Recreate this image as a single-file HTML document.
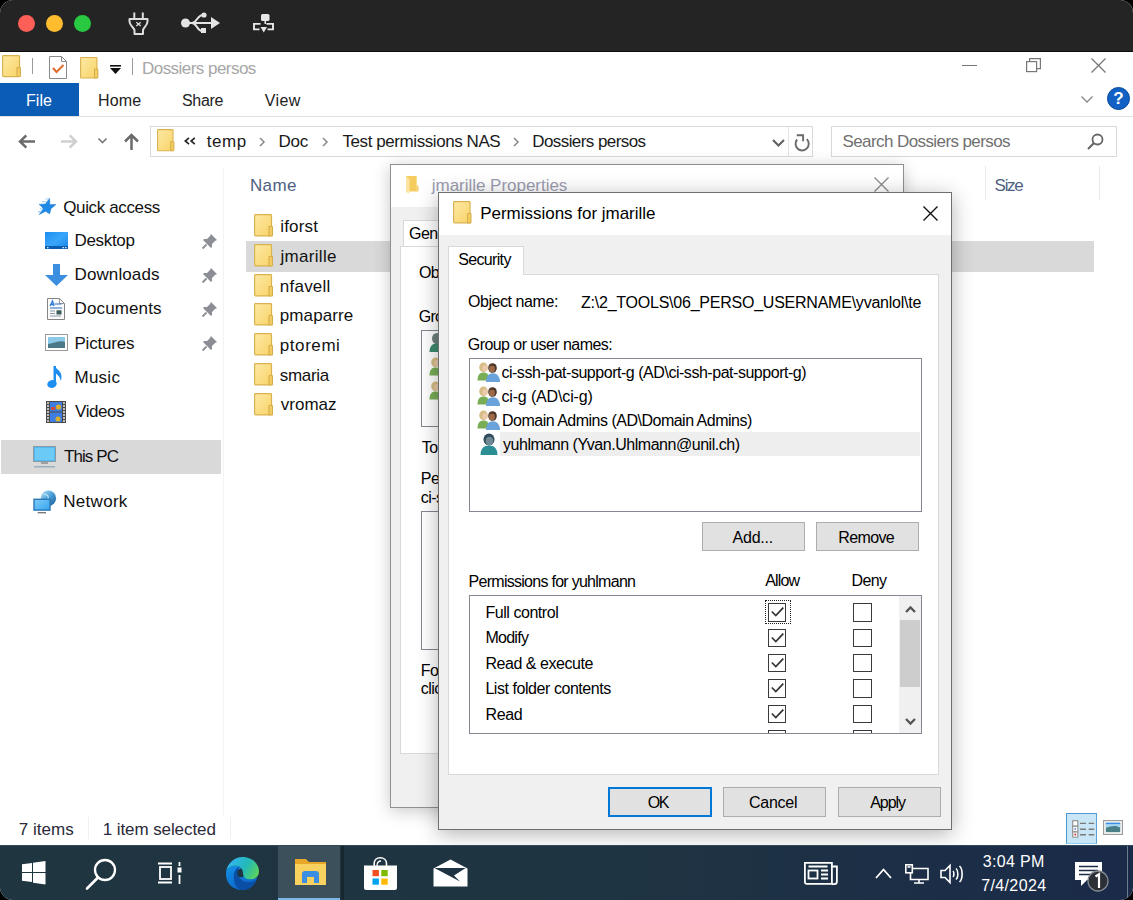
<!DOCTYPE html>
<html><head><meta charset="utf-8">
<style>
*{margin:0;padding:0;box-sizing:border-box}
html,body{width:1133px;height:900px;overflow:hidden;background:#000;font-family:"Liberation Sans",sans-serif}
.a{position:absolute}
svg{position:absolute;overflow:visible}
#screen{position:absolute;left:0;top:0;width:1133px;height:900px;background:#fff;border-radius:13px;overflow:hidden}
.t{position:absolute;white-space:nowrap;line-height:1}
.ex{font-size:17px;letter-spacing:-0.35px;color:#1a1a1a}
.dl{font-size:16px;letter-spacing:-0.6px;color:#000}
.fold{position:absolute;width:19px;height:22px}
</style></head><body>
<div id="screen">
<svg width="0" height="0" style="position:absolute"><defs><linearGradient id="fg" x1="0" y1="0" x2="1" y2="1"><stop offset="0" stop-color="#fde9a6"/><stop offset="1" stop-color="#f8d367"/></linearGradient></defs></svg>

<!-- ===== mac title bar ===== -->
<div class="a" style="left:0;top:0;width:1133px;height:52px;background:#242424;border-bottom:1px solid #0c0c0c"></div>
<div class="a" style="left:18px;top:15px;width:17px;height:17px;border-radius:50%;background:#fe5f57"></div>
<div class="a" style="left:46px;top:15px;width:17px;height:17px;border-radius:50%;background:#febc2e"></div>
<div class="a" style="left:74px;top:15px;width:17px;height:17px;border-radius:50%;background:#28c840"></div>
<!-- plug -->
<svg style="left:128px;top:12px" width="22" height="23" viewBox="0 0 22 23"><g fill="none" stroke="#dcdcdc" stroke-width="2"><path d="M6.3 0.5v6M14.8 0.5v6"/><path d="M1.5 7h18v2.5c0 4.5-4.5 6-4.5 9v3.5H6.5v-3.5C6.5 15.5 1.5 14 1.5 9.5z" stroke-linejoin="round"/><path d="M8.3 10.3l4.4 3.6M12.7 10.3l-4.4 3.6" stroke-width="1.3"/></g></svg>
<!-- usb -->
<svg style="left:181px;top:12px" width="39" height="23" viewBox="0 0 39 23"><g fill="#e4e4e4" stroke="#e4e4e4"><circle cx="4.5" cy="11" r="4.5" stroke="none"/><path d="M8 11h24" stroke-width="2"/><path d="M30 5l9 6-9 6z" stroke="none"/><path d="M11 11c5 0 5-8 11-8" fill="none" stroke-width="2"/><circle cx="23" cy="3" r="2.6" stroke="none"/><path d="M11 11c5 0 5 8 10 8" fill="none" stroke-width="2"/><rect x="20" y="16" width="5" height="5" stroke="none"/></g></svg>
<!-- network -->
<svg style="left:252.5px;top:14px" width="21" height="19" viewBox="0 0 21 19"><g fill="#e8e8e8"><rect x="8" y="0" width="8.5" height="7" rx="1.5"/><rect x="11.5" y="6.5" width="1.6" height="3.5"/></g><g fill="none" stroke="#e8e8e8" stroke-width="1.9"><path d="M7.5 9.9H1v5.5h5.5"/><path d="M13.5 9.9H20v5.5h-5.5"/></g><path d="M7.5 13h6.5l-3.25 5.5z" fill="#e8e8e8"/></svg>

<!-- ===== QAT row ===== -->
<svg style="left:2.0px;top:55.2px" width="19.0" height="22.2" viewBox="0 0 18 22.5" preserveAspectRatio="none"><rect x="0.6" y="0.6" width="16" height="21.3" rx="0.8" fill="url(#fg)" stroke="#d9b24f" stroke-width="1.1"/><rect x="14.2" y="12.6" width="3.3" height="9.3" rx="0.5" fill="#f3cd63" stroke="#d5ad4a" stroke-width="1"/></svg>
<svg style="left:79.8px;top:57.0px" width="18.4" height="21.5" viewBox="0 0 18 22.5" preserveAspectRatio="none"><rect x="0.6" y="0.6" width="16" height="21.3" rx="0.8" fill="url(#fg)" stroke="#d9b24f" stroke-width="1.1"/><rect x="14.2" y="12.6" width="3.3" height="9.3" rx="0.5" fill="#f3cd63" stroke="#d5ad4a" stroke-width="1"/></svg>
<div class="a" style="left:32px;top:58px;width:1px;height:16px;background:#9a9a9a"></div>
<svg style="left:49px;top:56px" width="18" height="23" viewBox="0 0 18 23"><path d="M0.5 0.5h12l5 5v17h-17z" fill="#fff" stroke="#8a8a8a"/><path d="M12.5 0.5v5h5" fill="none" stroke="#8a8a8a"/><path d="M4 12l3.5 4 7-7" fill="none" stroke="#e06b2a" stroke-width="2"/></svg>
<svg style="left:110px;top:65px" width="11" height="9" viewBox="0 0 11 9"><rect x="0" y="0" width="11" height="1.6" fill="#111"/><path d="M0 3h11l-5.5 6z" fill="#111"/></svg>
<div class="a" style="left:132px;top:58px;width:1px;height:17px;background:#9a9a9a"></div>
<div class="t ex" style="left:142.0px;top:59.8px;color:#a6a6a6;letter-spacing:-0.536px;font-size:17px">Dossiers persos</div>
<!-- window controls -->
<div class="a" style="left:962px;top:65px;width:15px;height:1px;background:#777"></div>
<svg style="left:1026px;top:58px" width="15" height="14" viewBox="0 0 15 14"><g fill="none" stroke="#777" stroke-width="1.2"><rect x="0.6" y="3.6" width="10" height="10"/><path d="M3.6 3.6V0.6h10.8v10h-3.8"/></g></svg>
<svg style="left:1091px;top:58px" width="15" height="15" viewBox="0 0 15 15"><path d="M0.5 0.5l14 14M14.5 0.5l-14 14" stroke="#777" stroke-width="1.3"/></svg>

<!-- ===== ribbon tabs ===== -->
<div class="a" style="left:0;top:83px;width:79px;height:33px;background:#0b5cb5"></div>
<div class="t" style="left:26.0px;top:93.0px;font-size:16px;color:#fff;letter-spacing:0.067px">File</div>
<div class="t ex" style="left:97.9px;top:93.0px;font-size:16px;letter-spacing:0.233px;color:#222">Home</div>
<div class="t ex" style="left:182.0px;top:93.0px;font-size:16px;letter-spacing:-0.300px;color:#222">Share</div>
<div class="t ex" style="left:264.8px;top:92.9px;font-size:16px;letter-spacing:0.400px;color:#222">View</div>
<svg style="left:1081px;top:96px" width="12" height="7" viewBox="0 0 12 7"><path d="M0.5 0.5l5.5 5.5 5.5-5.5" fill="none" stroke="#888" stroke-width="1.3"/></svg>
<div class="a" style="left:1107px;top:87px;width:23px;height:23px;border-radius:50%;background:#1162c4;border:1px solid #0b4a9a"></div>
<div class="t" style="left:1112px;top:90px;width:13px;text-align:center;font-size:17px;font-weight:bold;color:#fff">?</div>
<div class="a" style="left:0;top:116px;width:1133px;height:1px;background:#e1e1e1"></div>

<!-- ===== address bar row ===== -->
<svg style="left:18px;top:134px" width="18" height="15" viewBox="0 0 18 15"><path d="M17 7.5H2.5M8.3 1.3L2 7.5l6.3 6.2" fill="none" stroke="#6b6b6b" stroke-width="2.5"/></svg>
<svg style="left:60px;top:134px" width="18" height="15" viewBox="0 0 18 15"><path d="M1 7.5h14.5M9.7 1.3L16 7.5l-6.3 6.2" fill="none" stroke="#cfcfcf" stroke-width="2.5"/></svg>
<svg style="left:98px;top:138px" width="9" height="6" viewBox="0 0 9 6"><path d="M0.5 0.5l4 4 4-4" fill="none" stroke="#777" stroke-width="1.6"/></svg>
<svg style="left:123px;top:133px" width="17" height="17" viewBox="0 0 17 17"><path d="M8.5 17V2.5M2 8.5l6.5-6.5 6.5 6.5" fill="none" stroke="#6b6b6b" stroke-width="2.5"/></svg>
<div class="a" style="left:150px;top:126px;width:663px;height:31px;border:1px solid #d9d9d9"></div>
<div class="a" style="left:788px;top:127px;width:1px;height:29px;background:#e3e3e3"></div>
<svg style="left:157.1px;top:129.1px" width="17.4" height="22.3" viewBox="0 0 18 22.5" preserveAspectRatio="none"><rect x="0.6" y="0.6" width="16" height="21.3" rx="0.8" fill="url(#fg)" stroke="#d9b24f" stroke-width="1.1"/><rect x="14.2" y="12.6" width="3.3" height="9.3" rx="0.5" fill="#f3cd63" stroke="#d5ad4a" stroke-width="1"/></svg>
<svg style="left:183.8px;top:137px" width="12" height="8" viewBox="0 0 12 8"><path d="M5 0.8L1.3 4 5 7.2M10.8 0.8L7.1 4l3.7 3.2" fill="none" stroke="#2a2a2a" stroke-width="1.7"/></svg>
<div class="t ex" style="left:206.7px;top:132.9px;letter-spacing:0.533px;font-size:17px">temp</div>
<svg style="left:259px;top:137px" width="6" height="10" viewBox="0 0 6 10"><path d="M1 1l4 4-4 4" fill="none" stroke="#888" stroke-width="1.5"/></svg>
<div class="t ex" style="left:278.4px;top:132.9px;letter-spacing:-0.200px;font-size:17px">Doc</div>
<svg style="left:322px;top:137px" width="6" height="10" viewBox="0 0 6 10"><path d="M1 1l4 4-4 4" fill="none" stroke="#888" stroke-width="1.5"/></svg>
<div class="t ex" style="left:342.5px;top:132.9px;letter-spacing:-0.426px;font-size:17px">Test permissions NAS</div>
<svg style="left:513px;top:137px" width="6" height="10" viewBox="0 0 6 10"><path d="M1 1l4 4-4 4" fill="none" stroke="#888" stroke-width="1.5"/></svg>
<div class="t ex" style="left:532.2px;top:132.9px;letter-spacing:-0.571px;font-size:17px">Dossiers persos</div>
<svg style="left:771.6px;top:139px" width="13" height="8" viewBox="0 0 13 8"><path d="M1 1l5.5 5.5L12 1" fill="none" stroke="#616161" stroke-width="2.1"/></svg>
<svg style="left:794px;top:134px" width="16" height="17" viewBox="0 0 16 17"><path d="M3.2 5.5A6.6 6.6 0 1 0 12.8 5.2" fill="none" stroke="#6a6a6a" stroke-width="1.9"/><path d="M2.8 1.3h6.3v6" fill="none" stroke="#6a6a6a" stroke-width="1.9"/></svg>
<div class="a" style="left:831px;top:126px;width:286px;height:31px;border:1px solid #d9d9d9"></div>
<div class="t ex" style="left:842.5px;top:133.1px;color:#707070;letter-spacing:-0.590px;font-size:17px">Search Dossiers persos</div>
<svg style="left:1087px;top:133px" width="17" height="17" viewBox="0 0 17 17"><circle cx="10.5" cy="6.5" r="5" fill="none" stroke="#666" stroke-width="1.8"/><path d="M7 10l-6 6" stroke="#666" stroke-width="2.2"/></svg>

<!-- ===== nav pane ===== -->
<div class="a" style="left:223px;top:167px;width:1px;height:648px;background:#f3f3f3"></div>
<svg style="left:36px;top:197px" width="22" height="19" viewBox="0 0 22 19"><path d="M13.6 1.2 L13.8 7.7 L19.8 7.6 L14.9 11.7 L13.6 16.8 L9.7 14.2 L3.3 17.4 L7.4 11.5 L3.2 7.4 L9.6 7.0z" fill="#1e8ae6" stroke="#1a78d0" stroke-width="0.6" stroke-linejoin="round"/><path d="M9.5 2h4M6 4.8h5M4 11.8h3M2 14.6h3.5" stroke="#9ccff3" stroke-width="1.1"/></svg>
<div class="t ex" style="left:63.2px;top:198.8px;letter-spacing:-0.355px;color:#111;font-size:17px">Quick access</div>
<svg style="left:45px;top:232px" width="23" height="18" viewBox="0 0 23 18"><defs><linearGradient id="dk" x1="0" y1="0" x2="1" y2="1"><stop offset="0" stop-color="#1b8ef2"/><stop offset="0.5" stop-color="#3aa6fa"/><stop offset="1" stop-color="#1784e8"/></linearGradient></defs><rect x="0" y="0" width="23" height="17" fill="url(#dk)"/><rect x="0" y="14" width="23" height="3" fill="#0a5cb0"/><rect x="2" y="15" width="1.5" height="1.3" fill="#cfe8ff"/><rect x="17.5" y="15" width="1.5" height="1.3" fill="#cfe8ff"/><rect x="20" y="15" width="1.5" height="1.3" fill="#cfe8ff"/></svg>
<div class="t ex" style="left:74.5px;top:232.0px;letter-spacing:-0.317px;color:#111;font-size:17px">Desktop</div>
<svg style="left:45px;top:264px" width="23" height="22" viewBox="0 0 23 22"><path d="M8 0h7v11h8L11.5 22 0 11h8z" fill="#3b8ee0"/></svg>
<div class="t ex" style="left:74.5px;top:266.3px;letter-spacing:0.113px;color:#111;font-size:17px">Downloads</div>
<svg style="left:47px;top:298px" width="18" height="22" viewBox="0 0 18 22"><path d="M0.5 0.5h12l5 5v16h-17z" fill="#fafafa" stroke="#858585"/><path d="M12.5 0.5v5h5" fill="none" stroke="#9a9a9a"/><path d="M3 8l2.5-5 1.5 5M4 6.5h2.5" fill="none" stroke="#2a7ad8" stroke-width="1.3"/><path d="M7.5 6h7M3 10h12" stroke="#2a6ab8" stroke-width="1.2"/><path d="M3 13h5M3 15.5h5M3 18h11" stroke="#8a9aa8" stroke-width="1"/><rect x="9.5" y="12.3" width="5" height="4.2" fill="#3a5a5a"/></svg>
<div class="t ex" style="left:74.5px;top:299.8px;letter-spacing:0.137px;color:#111;font-size:17px">Documents</div>
<svg style="left:45px;top:334px" width="23" height="17" viewBox="0 0 23 17"><rect x="0.5" y="0.5" width="22" height="16" fill="#fff" stroke="#9a9a9a"/><rect x="3" y="3" width="17" height="11" fill="#4a7a8a"/><path d="M3 3h17v5c-5-2-10 1-17 2z" fill="#8cc8e8"/></svg>
<div class="t ex" style="left:74.5px;top:334.5px;letter-spacing:-0.214px;color:#111;font-size:17px">Pictures</div>
<svg style="left:47px;top:365px" width="18" height="24" viewBox="0 0 18 24"><path d="M6.5 1h2.5v17H6.5z" fill="#1c8ff0"/><ellipse cx="5" cy="19" rx="4.8" ry="3.8" fill="#1c8ff0" transform="rotate(-15 5 19)"/><path d="M7 0.5c1.5 3 7.5 5 7.5 11 0 2-.5 3.5-1 4.5 0-4-3-7-6.5-8z" fill="#1c8ff0"/></svg>
<div class="t ex" style="left:74.5px;top:368.5px;letter-spacing:0.250px;color:#111;font-size:17px">Music</div>
<svg style="left:46px;top:401px" width="20" height="22" viewBox="0 0 20 22"><rect x="0" y="0" width="20" height="22" fill="#4a4a4a"/><rect x="4" y="1" width="12" height="9.5" fill="#3d7ee0"/><rect x="4" y="11.5" width="12" height="9.5" fill="#3d7ee0"/><circle cx="12.5" cy="6" r="2.6" fill="#d8b02a"/><rect x="5" y="6" width="4" height="3" fill="#d04a3a"/><circle cx="12" cy="18" r="2.5" fill="#d8b02a"/><path d="M1 2h2M1 5h2M1 8h2M1 11h2M1 14h2M1 17h2M1 20h2M17 2h2M17 5h2M17 8h2M17 11h2M17 14h2M17 17h2M17 20h2" stroke="#e8e8e8" stroke-width="1.4"/></svg>
<div class="t ex" style="left:75.0px;top:402.5px;letter-spacing:-0.400px;color:#111;font-size:17px">Videos</div>
<div class="a" style="left:1px;top:439.5px;width:220px;height:34px;background:#d9d9d9"></div>
<svg style="left:33px;top:446px" width="23" height="22" viewBox="0 0 23 22"><rect x="0.5" y="0.5" width="22" height="15" fill="#53b9f0" stroke="#8a9aa5"/><rect x="2" y="2" width="19" height="12" fill="#6ccaf7"/><rect x="8" y="16" width="7" height="2" fill="#a0a0a0"/><rect x="1" y="20" width="21" height="1.5" fill="#9cb0bc"/></svg>
<div class="t ex" style="left:63.9px;top:447.8px;letter-spacing:-0.883px;color:#111;font-size:17px">This PC</div>
<svg style="left:33px;top:490px" width="24" height="24" viewBox="0 0 24 24"><defs><linearGradient id="gl" x1="0" y1="0" x2="1" y2="1"><stop offset="0" stop-color="#b8e4f8"/><stop offset="0.5" stop-color="#4a9ed8"/><stop offset="1" stop-color="#1a5a90"/></linearGradient><linearGradient id="ms" x1="0" y1="0" x2="1" y2="1"><stop offset="0" stop-color="#80ccfa"/><stop offset="1" stop-color="#36a4ee"/></linearGradient></defs><circle cx="15.4" cy="8.2" r="7.7" fill="url(#gl)"/><path d="M10 4c2 1 4 0 5 2s-1 4 1 5" fill="none" stroke="#c8ecfa" stroke-width="1.2" opacity="0.8"/><rect x="1" y="9.3" width="16" height="10.8" fill="url(#ms)" stroke="#2a78b8" stroke-width="1.4"/><rect x="4.7" y="22" width="8.3" height="1.4" fill="#7a7a7a"/></svg>
<div class="t ex" style="left:63.3px;top:493.1px;letter-spacing:0.283px;color:#111;font-size:17px">Network</div>
<!-- pins -->
<svg style="left:202px;top:234px" width="15" height="15" viewBox="0 0 15 15"><path d="M9 0l6 6-2 1-3 3v3l-1 1-8-8 1-1h3l3-3z" fill="#8b8f95"/><path d="M4.5 10.5L0.5 14.5" stroke="#8b8f95" stroke-width="1.8"/></svg>
<svg style="left:202px;top:268px" width="15" height="15" viewBox="0 0 15 15"><path d="M9 0l6 6-2 1-3 3v3l-1 1-8-8 1-1h3l3-3z" fill="#8b8f95"/><path d="M4.5 10.5L0.5 14.5" stroke="#8b8f95" stroke-width="1.8"/></svg>
<svg style="left:202px;top:302px" width="15" height="15" viewBox="0 0 15 15"><path d="M9 0l6 6-2 1-3 3v3l-1 1-8-8 1-1h3l3-3z" fill="#8b8f95"/><path d="M4.5 10.5L0.5 14.5" stroke="#8b8f95" stroke-width="1.8"/></svg>
<svg style="left:202px;top:336px" width="15" height="15" viewBox="0 0 15 15"><path d="M9 0l6 6-2 1-3 3v3l-1 1-8-8 1-1h3l3-3z" fill="#8b8f95"/><path d="M4.5 10.5L0.5 14.5" stroke="#8b8f95" stroke-width="1.8"/></svg>

<!-- ===== file list ===== -->
<div class="t ex" style="left:250.0px;top:176.7px;color:#4d6082;letter-spacing:0.333px;font-size:17px">Name</div>
<div class="a" style="left:985px;top:166px;width:1px;height:34px;background:#eaeaea"></div>
<div class="t ex" style="left:994.6px;top:176.7px;color:#4d6082;letter-spacing:-1.300px;font-size:17px">Size</div>
<div class="a" style="left:1099px;top:166px;width:1px;height:34px;background:#eaeaea"></div>
<div class="a" style="left:246px;top:241px;width:848px;height:30.5px;background:#d9d9d9"></div>
<svg style="left:254.2px;top:214.0px" width="19.0" height="22.5" viewBox="0 0 18 22.5" preserveAspectRatio="none"><rect x="0.6" y="0.6" width="16" height="21.3" rx="0.8" fill="url(#fg)" stroke="#d9b24f" stroke-width="1.1"/><rect x="14.2" y="12.6" width="3.3" height="9.3" rx="0.5" fill="#f3cd63" stroke="#d5ad4a" stroke-width="1"/></svg>
<svg style="left:254.2px;top:243.8px" width="19.0" height="22.5" viewBox="0 0 18 22.5" preserveAspectRatio="none"><rect x="0.6" y="0.6" width="16" height="21.3" rx="0.8" fill="url(#fg)" stroke="#d9b24f" stroke-width="1.1"/><rect x="14.2" y="12.6" width="3.3" height="9.3" rx="0.5" fill="#f3cd63" stroke="#d5ad4a" stroke-width="1"/></svg>
<svg style="left:254.2px;top:273.5px" width="19.0" height="22.5" viewBox="0 0 18 22.5" preserveAspectRatio="none"><rect x="0.6" y="0.6" width="16" height="21.3" rx="0.8" fill="url(#fg)" stroke="#d9b24f" stroke-width="1.1"/><rect x="14.2" y="12.6" width="3.3" height="9.3" rx="0.5" fill="#f3cd63" stroke="#d5ad4a" stroke-width="1"/></svg>
<svg style="left:254.2px;top:303.2px" width="19.0" height="22.5" viewBox="0 0 18 22.5" preserveAspectRatio="none"><rect x="0.6" y="0.6" width="16" height="21.3" rx="0.8" fill="url(#fg)" stroke="#d9b24f" stroke-width="1.1"/><rect x="14.2" y="12.6" width="3.3" height="9.3" rx="0.5" fill="#f3cd63" stroke="#d5ad4a" stroke-width="1"/></svg>
<svg style="left:254.2px;top:333.0px" width="19.0" height="22.5" viewBox="0 0 18 22.5" preserveAspectRatio="none"><rect x="0.6" y="0.6" width="16" height="21.3" rx="0.8" fill="url(#fg)" stroke="#d9b24f" stroke-width="1.1"/><rect x="14.2" y="12.6" width="3.3" height="9.3" rx="0.5" fill="#f3cd63" stroke="#d5ad4a" stroke-width="1"/></svg>
<svg style="left:254.2px;top:362.8px" width="19.0" height="22.5" viewBox="0 0 18 22.5" preserveAspectRatio="none"><rect x="0.6" y="0.6" width="16" height="21.3" rx="0.8" fill="url(#fg)" stroke="#d9b24f" stroke-width="1.1"/><rect x="14.2" y="12.6" width="3.3" height="9.3" rx="0.5" fill="#f3cd63" stroke="#d5ad4a" stroke-width="1"/></svg>
<svg style="left:254.2px;top:392.5px" width="19.0" height="22.5" viewBox="0 0 18 22.5" preserveAspectRatio="none"><rect x="0.6" y="0.6" width="16" height="21.3" rx="0.8" fill="url(#fg)" stroke="#d9b24f" stroke-width="1.1"/><rect x="14.2" y="12.6" width="3.3" height="9.3" rx="0.5" fill="#f3cd63" stroke="#d5ad4a" stroke-width="1"/></svg>
<div class="t ex" style="left:280.2px;top:217.7px;letter-spacing:0.200px;color:#111;font-size:17px">iforst</div>
<div class="t ex" style="left:280.4px;top:247.9px;letter-spacing:0.329px;color:#111;font-size:17px">jmarille</div>
<div class="t ex" style="left:279.8px;top:277.7px;letter-spacing:0.233px;color:#111;font-size:17px">nfavell</div>
<div class="t ex" style="left:279.8px;top:306.8px;letter-spacing:0.100px;color:#111;font-size:17px">pmaparre</div>
<div class="t ex" style="left:279.8px;top:336.8px;letter-spacing:0.567px;color:#111;font-size:17px">ptoremi</div>
<div class="t ex" style="left:279.8px;top:366.8px;letter-spacing:-0.320px;color:#111;font-size:17px">smaria</div>
<div class="t ex" style="left:280.8px;top:396.0px;letter-spacing:0.000px;color:#111;font-size:17px">vromaz</div>
<!-- status bar -->
<div class="t ex" style="left:18.8px;top:821.2px;letter-spacing:0.017px;color:#2a2a3a;font-size:17px">7 items</div>
<div class="a" style="left:87.5px;top:817px;width:1px;height:22px;background:#f0f0f0"></div>
<div class="t ex" style="left:102.8px;top:821.2px;letter-spacing:-0.093px;color:#2a2a3a;font-size:17px">1 item selected</div>
<div class="a" style="left:229.5px;top:817px;width:1px;height:22px;background:#f0f0f0"></div>
<div class="a" style="left:1066px;top:812.7px;width:31px;height:31px;background:#c9e6f7;border:1.5px solid #4b9ad6;border-bottom-color:#8fd0f5;border-right-color:#5aa0d0"></div><svg style="left:1071.9px;top:819.8px" width="23" height="18" viewBox="0 0 23 18"><rect x="0" y="0" width="6.5" height="17.8" rx="1" fill="#9a9a9a"/><rect x="1.3" y="1.3" width="3.9" height="4" fill="#fff"/><rect x="1.3" y="7" width="3.9" height="4" fill="#fff"/><rect x="1.3" y="12.6" width="3.9" height="4" fill="#fff"/><circle cx="3.25" cy="14.6" r="1" fill="#d03030"/><circle cx="3.25" cy="9" r="0.9" fill="#6a8ae0"/><path d="M8 3.4h6M16.7 3.4h5.5M8 9.2h6M16.7 9.2h5.5M8 14.8h6M16.7 14.8h5.5" stroke="#7a7a7a" stroke-width="1.4"/></svg><svg style="left:1103.2px;top:820px" width="20" height="15" viewBox="0 0 20 15"><rect x="0.6" y="0.6" width="18.8" height="13.8" fill="#fff" stroke="#9c9c9c" stroke-width="1.2"/><rect x="2.8" y="2.8" width="14.4" height="9.4" fill="#4a7f88"/><path d="M2.8 2.8h14.4v5c-4-3-9-2-14.4 0z" fill="#a8d8f0"/><rect x="2.8" y="2.8" width="14.4" height="1.3" fill="#3a8ee8"/></svg>

<!--DSTART--><!-- ===== Properties dialog (behind) ===== -->
<div class="a" style="left:390px;top:163.5px;width:513.5px;height:644px;background:#f0f0f0;border:1px solid #8f8f8f;box-shadow:0 3px 16px rgba(0,0,0,0.22)"></div>
<div class="a" style="left:391px;top:164.5px;width:511.5px;height:42px;background:#fff"></div>
<svg style="left:405px;top:175px" width="14" height="19" viewBox="0 0 14 19"><path d="M1 1h10.7v15.5H1z" fill="#f5cd5e"/><path d="M11.5 10.5h2v6h-2z" fill="#f3cf6a"/><path d="M1 1l3.5 3v12.5L4.2 18.8 1 17z" fill="#fde4a0"/></svg>
<div class="t" style="left:431.8px;top:177.3px;font-size:17px;letter-spacing:-0.028px;color:#9c9cb0">jmarille Properties</div>
<svg style="left:874px;top:177px" width="15" height="15" viewBox="0 0 15 15"><path d="M0.5 0.5l14 14M14.5 0.5l-14 14" stroke="#8a8a8a" stroke-width="1.3"/></svg>
<div class="a" style="left:402.7px;top:220px;width:80px;height:27px;background:#fff;border:1px solid #d9d9d9;border-bottom:none"></div>
<div class="a" style="left:400.3px;top:246px;width:493px;height:508px;background:#fff;border:1px solid #d9d9d9"></div>
<div class="a" style="left:421px;top:329.6px;width:452px;height:97.5px;background:#fff;border:1px solid #828790"></div>
<svg style="left:428.5px;top:333px" width="20" height="19" viewBox="0 0 20 19"><ellipse cx="8" cy="5.5" rx="5" ry="5.5" fill="#6d7f7c"/><path d="M0.5 19c0-6 3-8.5 7.5-8.5s7.5 2.5 7.5 8.5z" fill="#3e8a6e"/></svg><svg style="left:428.5px;top:356.5px" width="24" height="20" viewBox="0 0 24 20"><ellipse cx="6.5" cy="5.3" rx="4.3" ry="4.8" fill="#d6bd86"/><ellipse cx="8" cy="6.2" rx="2.6" ry="3.3" fill="#ecc9a8"/><path d="M0.5 18.5c0-5.5 2.2-8 6-8s6 2.5 6 8z" fill="#79ae57"/><ellipse cx="15.5" cy="6" rx="4.3" ry="4.8" fill="#4a3426"/><ellipse cx="15" cy="7" rx="3" ry="3.4" fill="#9c6a48"/><path d="M9 20c0-6 2.8-8.8 6.8-8.8S23 14 23 20z" fill="#6aa3db"/></svg><svg style="left:428.5px;top:380.5px" width="24" height="20" viewBox="0 0 24 20"><ellipse cx="6.5" cy="5.3" rx="4.3" ry="4.8" fill="#d6bd86"/><ellipse cx="8" cy="6.2" rx="2.6" ry="3.3" fill="#ecc9a8"/><path d="M0.5 18.5c0-5.5 2.2-8 6-8s6 2.5 6 8z" fill="#79ae57"/><ellipse cx="15.5" cy="6" rx="4.3" ry="4.8" fill="#4a3426"/><ellipse cx="15" cy="7" rx="3" ry="3.4" fill="#9c6a48"/><path d="M9 20c0-6 2.8-8.8 6.8-8.8S23 14 23 20z" fill="#6aa3db"/></svg>
<div class="a" style="left:421px;top:511px;width:452px;height:138.5px;background:#fff;border:1px solid #828790"></div>
<div class="t" style="left:409.0px;top:226.0px;font-size:16px;letter-spacing:-0.550px;color:#000">General</div>
<div class="t" style="left:419.0px;top:265.0px;font-size:16px;letter-spacing:-0.623px;color:#000">Object name:</div>
<div class="t" style="left:418.7px;top:309.0px;font-size:16px;letter-spacing:-0.707px;color:#000">Group or user names:</div>
<div class="t" style="left:421.8px;top:439.7px;font-size:16px;letter-spacing:-0.550px;color:#000">To change permissions, click Edit.</div>
<div class="t" style="left:420.8px;top:470.6px;font-size:16px;letter-spacing:-0.550px;color:#000">Permissions for ci-ssh-pat-support-g</div>
<div class="t" style="left:420.8px;top:490.3px;font-size:16px;letter-spacing:-0.550px;color:#000">ci-ssh-pat-support-g</div>
<div class="t" style="left:420.8px;top:662.5px;font-size:16px;letter-spacing:-0.550px;color:#000">For special permissions or advanced settings,</div>
<div class="t" style="left:420.8px;top:681.2px;font-size:16px;letter-spacing:-0.550px;color:#000">click Advanced.</div>

<!-- ===== Permissions dialog ===== -->
<div class="a" style="left:438px;top:191.5px;width:513.5px;height:638px;background:#f0f0f0;border:1px solid #6f6f6f;box-shadow:0 4px 20px rgba(0,0,0,0.3)"></div>
<div class="a" style="left:439px;top:192.5px;width:511.5px;height:42.5px;background:#fff"></div>
<svg style="left:453.0px;top:201.0px" width="18.5" height="22.5" viewBox="0 0 18 22.5" preserveAspectRatio="none"><rect x="0.6" y="0.6" width="16" height="21.3" rx="0.8" fill="url(#fg)" stroke="#d9b24f" stroke-width="1.1"/><rect x="14.2" y="12.6" width="3.3" height="9.3" rx="0.5" fill="#f3cd63" stroke="#d5ad4a" stroke-width="1"/></svg>
<div class="t" style="left:480.2px;top:205.1px;font-size:17px;letter-spacing:-0.017px;color:#000">Permissions for jmarille</div>
<svg style="left:922.5px;top:205.5px" width="15" height="15" viewBox="0 0 15 15"><path d="M0.5 0.5l14 14M14.5 0.5l-14 14" stroke="#111" stroke-width="1.4"/></svg>
<div class="a" style="left:447.7px;top:245.6px;width:76px;height:29px;background:#fff;border:1px solid #d9d9d9;border-bottom:none"></div>
<div class="a" style="left:448px;top:273.8px;width:491px;height:501.5px;background:#fff;border:1px solid #d9d9d9"></div>
<div class="a" style="left:448.7px;top:273.8px;width:74.6px;height:2px;background:#fff"></div>
<!-- groups list -->
<div class="a" style="left:469.4px;top:358px;width:453px;height:153.5px;background:#fff;border:1px solid #828790"></div>
<div class="a" style="left:499.7px;top:432.4px;width:420px;height:23.6px;background:#eeeeee"></div>
<svg style="left:477px;top:361.8px" width="24" height="20" viewBox="0 0 24 20"><ellipse cx="6.5" cy="5.3" rx="4.3" ry="4.8" fill="#d6bd86"/><ellipse cx="8" cy="6.2" rx="2.6" ry="3.3" fill="#ecc9a8"/><path d="M0.5 18.5c0-5.5 2.2-8 6-8s6 2.5 6 8z" fill="#79ae57"/><ellipse cx="15.5" cy="6" rx="4.3" ry="4.8" fill="#4a3426"/><ellipse cx="15" cy="7" rx="3" ry="3.4" fill="#9c6a48"/><path d="M9 20c0-6 2.8-8.8 6.8-8.8S23 14 23 20z" fill="#6aa3db"/></svg>
<svg style="left:477px;top:386.0px" width="24" height="20" viewBox="0 0 24 20"><ellipse cx="6.5" cy="5.3" rx="4.3" ry="4.8" fill="#d6bd86"/><ellipse cx="8" cy="6.2" rx="2.6" ry="3.3" fill="#ecc9a8"/><path d="M0.5 18.5c0-5.5 2.2-8 6-8s6 2.5 6 8z" fill="#79ae57"/><ellipse cx="15.5" cy="6" rx="4.3" ry="4.8" fill="#4a3426"/><ellipse cx="15" cy="7" rx="3" ry="3.4" fill="#9c6a48"/><path d="M9 20c0-6 2.8-8.8 6.8-8.8S23 14 23 20z" fill="#6aa3db"/></svg>
<svg style="left:477px;top:410.2px" width="24" height="20" viewBox="0 0 24 20"><ellipse cx="6.5" cy="5.3" rx="4.3" ry="4.8" fill="#d6bd86"/><ellipse cx="8" cy="6.2" rx="2.6" ry="3.3" fill="#ecc9a8"/><path d="M0.5 18.5c0-5.5 2.2-8 6-8s6 2.5 6 8z" fill="#79ae57"/><ellipse cx="15.5" cy="6" rx="4.3" ry="4.8" fill="#4a3426"/><ellipse cx="15" cy="7" rx="3" ry="3.4" fill="#9c6a48"/><path d="M9 20c0-6 2.8-8.8 6.8-8.8S23 14 23 20z" fill="#6aa3db"/></svg>
<svg style="left:479px;top:433.0px" width="20" height="22" viewBox="0 0 20 22"><ellipse cx="10" cy="6.5" rx="5.5" ry="6" fill="#2f4a5a"/><ellipse cx="10.5" cy="8" rx="3.8" ry="4.3" fill="#6f8a94"/><path d="M1.5 22c0-6.5 3.5-9.5 8.5-9.5s8.5 3 8.5 9.5z" fill="#2b8f94"/></svg>
<!-- buttons -->
<div class="a" style="left:702px;top:522px;width:102.7px;height:29.3px;background:#e1e1e1;border:1px solid #adadad"></div>
<div class="a" style="left:816.2px;top:522px;width:103.3px;height:29.3px;background:#e1e1e1;border:1px solid #adadad"></div>
<!-- permissions list -->
<div class="a" style="left:469.2px;top:595px;width:453.3px;height:138.6px;background:#fff;border:1px solid #828790;overflow:hidden">
 <div class="a" style="left:295.1px;top:4.0px;width:25.5px;height:24px;border:1px dotted #222"></div>
 <div class="a" style="left:297.8px;top:7.0px;width:18.5px;height:18.5px;border:1.5px solid #3a3a3a;background:#fff"></div><svg style="left:300.8px;top:11.0px" width="13" height="10" viewBox="0 0 13 10"><path d="M0.8 4.5l4 4 7.5-7.8" fill="none" stroke="#333" stroke-width="1.7"/></svg>
 <div class="a" style="left:383.2px;top:7.0px;width:18.5px;height:18.5px;border:1.5px solid #3a3a3a;background:#fff"></div>
 <div class="a" style="left:297.8px;top:32.5px;width:18.5px;height:18.5px;border:1.5px solid #3a3a3a;background:#fff"></div><svg style="left:300.8px;top:36.5px" width="13" height="10" viewBox="0 0 13 10"><path d="M0.8 4.5l4 4 7.5-7.8" fill="none" stroke="#333" stroke-width="1.7"/></svg>
 <div class="a" style="left:383.2px;top:32.5px;width:18.5px;height:18.5px;border:1.5px solid #3a3a3a;background:#fff"></div>
 <div class="a" style="left:297.8px;top:57.9px;width:18.5px;height:18.5px;border:1.5px solid #3a3a3a;background:#fff"></div><svg style="left:300.8px;top:61.9px" width="13" height="10" viewBox="0 0 13 10"><path d="M0.8 4.5l4 4 7.5-7.8" fill="none" stroke="#333" stroke-width="1.7"/></svg>
 <div class="a" style="left:383.2px;top:57.9px;width:18.5px;height:18.5px;border:1.5px solid #3a3a3a;background:#fff"></div>
 <div class="a" style="left:297.8px;top:83.3px;width:18.5px;height:18.5px;border:1.5px solid #3a3a3a;background:#fff"></div><svg style="left:300.8px;top:87.3px" width="13" height="10" viewBox="0 0 13 10"><path d="M0.8 4.5l4 4 7.5-7.8" fill="none" stroke="#333" stroke-width="1.7"/></svg>
 <div class="a" style="left:383.2px;top:83.3px;width:18.5px;height:18.5px;border:1.5px solid #3a3a3a;background:#fff"></div>
 <div class="a" style="left:297.8px;top:108.8px;width:18.5px;height:18.5px;border:1.5px solid #3a3a3a;background:#fff"></div><svg style="left:300.8px;top:112.8px" width="13" height="10" viewBox="0 0 13 10"><path d="M0.8 4.5l4 4 7.5-7.8" fill="none" stroke="#333" stroke-width="1.7"/></svg>
 <div class="a" style="left:383.2px;top:108.8px;width:18.5px;height:18.5px;border:1.5px solid #3a3a3a;background:#fff"></div>
 <div class="a" style="left:297.8px;top:134.2px;width:18.5px;height:18.5px;border:1.5px solid #3a3a3a;background:#fff"></div><svg style="left:300.8px;top:138.2px" width="13" height="10" viewBox="0 0 13 10"><path d="M0.8 4.5l4 4 7.5-7.8" fill="none" stroke="#333" stroke-width="1.7"/></svg>
 <div class="a" style="left:383.2px;top:134.2px;width:18.5px;height:18.5px;border:1.5px solid #3a3a3a;background:#fff"></div>
 <div class="a" style="left:428.6px;top:0;width:22px;height:137px;background:#f0f0f0"></div>
 <div class="a" style="left:429.6px;top:23.8px;width:20px;height:67px;background:#cdcdcd"></div>
 <svg style="left:434.6px;top:9.5px" width="11" height="7" viewBox="0 0 11 7"><path d="M1 6l4.5-4.5L10 6" fill="none" stroke="#555" stroke-width="2.3"/></svg>
 <svg style="left:434.6px;top:121.5px" width="11" height="7" viewBox="0 0 11 7"><path d="M1 1l4.5 4.5L10 1" fill="none" stroke="#555" stroke-width="2.3"/></svg>
</div>
<!-- OK Cancel Apply -->
<div class="a" style="left:608px;top:787px;width:103.5px;height:29.5px;background:#e1e1e1;border:2px solid #0078d7"></div>
<div class="a" style="left:722.9px;top:787px;width:102.9px;height:29.5px;background:#e1e1e1;border:1px solid #adadad"></div>
<div class="a" style="left:837.5px;top:787px;width:103.5px;height:29.5px;background:#e1e1e1;border:1px solid #adadad"></div>
<div class="t" style="left:458.2px;top:252.0px;font-size:16px;letter-spacing:-0.657px;color:#000">Security</div>
<div class="t" style="left:467.9px;top:294.4px;font-size:16px;letter-spacing:-0.427px;color:#000">Object name:</div>
<div class="t" style="left:581.0px;top:294.6px;font-size:16px;letter-spacing:-0.232px;color:#000">Z:\2_TOOLS\06_PERSO_USERNAME\yvanlol\te</div>
<div class="t" style="left:467.8px;top:336.6px;font-size:16px;letter-spacing:-0.568px;color:#000">Group or user names:</div>
<div class="t" style="left:501.4px;top:364.7px;font-size:16px;letter-spacing:-0.469px;color:#000">ci-ssh-pat-support-g (AD\ci-ssh-pat-support-g)</div>
<div class="t" style="left:501.4px;top:389.3px;font-size:16px;letter-spacing:-0.146px;color:#000">ci-g (AD\ci-g)</div>
<div class="t" style="left:502.0px;top:413.2px;font-size:16px;letter-spacing:-0.503px;color:#000">Domain Admins (AD\Domain Admins)</div>
<div class="t" style="left:503.0px;top:437.2px;font-size:16px;letter-spacing:-0.467px;color:#000">yuhlmann (Yvan.Uhlmann@unil.ch)</div>
<div class="t" style="left:732.5px;top:530.3px;font-size:16px;letter-spacing:-0.200px;color:#000">Add...</div>
<div class="t" style="left:838.2px;top:530.3px;font-size:16px;letter-spacing:-0.600px;color:#000">Remove</div>
<div class="t" style="left:468.6px;top:574.0px;font-size:16px;letter-spacing:-0.726px;color:#000">Permissions for yuhlmann</div>
<div class="t" style="left:765.3px;top:573.2px;font-size:16px;letter-spacing:-0.900px;color:#000">Allow</div>
<div class="t" style="left:851.5px;top:573.2px;font-size:16px;letter-spacing:-0.633px;color:#000">Deny</div>
<div class="t" style="left:485.4px;top:604.8px;font-size:16px;letter-spacing:-0.445px;color:#000">Full control</div>
<div class="t" style="left:485.4px;top:630.2px;font-size:16px;letter-spacing:-0.720px;color:#000">Modify</div>
<div class="t" style="left:485.4px;top:655.8px;font-size:16px;letter-spacing:-0.446px;color:#000">Read &amp; execute</div>
<div class="t" style="left:485.4px;top:681.2px;font-size:16px;letter-spacing:-0.442px;color:#000">List folder contents</div>
<div class="t" style="left:485.4px;top:706.5px;font-size:16px;letter-spacing:-0.300px;color:#000">Read</div>
<div class="t" style="left:647.8px;top:795.4px;font-size:16px;letter-spacing:-1.400px;color:#000">OK</div>
<div class="t" style="left:749.0px;top:795.4px;font-size:16px;letter-spacing:-0.260px;color:#000">Cancel</div>
<div class="t" style="left:870.2px;top:795.4px;font-size:16px;letter-spacing:-1.050px;color:#000">Apply</div>
<!--DEND-->
<!--TSTART--><!-- ===== taskbar ===== -->
<div class="a" style="left:0;top:845px;width:1133px;height:55px;background:linear-gradient(90deg,#1f3540 0%,#1f3442 55%,#1c2f46 78%,#1a2a49 100%)"></div>
<div class="a" style="left:0;top:845px;width:1133px;height:1px;background:#33495a"></div>
<svg style="left:22px;top:861px" width="24" height="24" viewBox="0 0 24 24"><path d="M0 3.3l10-1.4V11H0zM11 1.7L23.5 0v11H11zM0 12h10v9.1L0 19.7zM11 12h12.5v11.5L11 21.8z" fill="#fff"/></svg>
<svg style="left:85px;top:858px" width="33" height="32" viewBox="0 0 33 32"><circle cx="20" cy="12" r="10" fill="none" stroke="#fff" stroke-width="2.3"/><path d="M13 19.5L2 30.5" stroke="#fff" stroke-width="2.6" stroke-linecap="round"/></svg>
<svg style="left:158px;top:862px" width="24" height="22" viewBox="0 0 24 22"><g fill="none" stroke="#fff" stroke-width="1.8"><path d="M0 1.5h14M0 20.5h14"/><rect x="2" y="5" width="11" height="12"/><path d="M21.5 0v4M21.5 13v9"/></g><rect x="19.5" y="5.5" width="4" height="5" fill="#fff"/></svg>
<svg style="left:224.5px;top:856px" width="35" height="35" viewBox="0 0 36 36"><defs><linearGradient id="eg1" x1="0" y1="0.3" x2="1" y2="0.7"><stop offset="0" stop-color="#33b5f4"/><stop offset="0.55" stop-color="#22b9b8"/><stop offset="1" stop-color="#5ed35c"/></linearGradient><linearGradient id="eg2" x1="0" y1="0" x2="0.6" y2="1"><stop offset="0" stop-color="#1492e6"/><stop offset="1" stop-color="#0b62c8"/></linearGradient></defs>
<path d="M1.3 15C3 12 7 10 12 10c3.5 0 6 3 6 6.5 0 4 3.5 7 8 7 3 0 6-1 7.5-2.2C31 30 25 35 18 35 8 35 1 28 1 19z" fill="url(#eg2)"/>
<path d="M9 21c0-5 2.5-9 6-10-2 2.5-2.3 6-1 9.5 2.5 6 11 8.5 18.5 4C30 31.5 24.5 35 18 35c-5 0-9-6-9-14z" fill="#0a4ea6"/>
<ellipse cx="16.5" cy="17.5" rx="3.8" ry="4.3" fill="#1f3440"/>
<path d="M1.3 15C3 7 10 1 18 1c10 0 17 7 17 15 0 5-4 8-9 8-4.5 0-7.5-2.5-7.5-6 0-4-2.5-8-6.5-8C7 10 3 12 1.3 15z" fill="url(#eg1)"/>
</svg>
<div class="a" style="left:277.5px;top:846px;width:62.5px;height:54px;background:#3c505c"></div>
<div class="a" style="left:277.5px;top:897.5px;width:62.5px;height:2.5px;background:#7ab8e8"></div>
<div class="a" style="left:340.5px;top:846px;width:3px;height:54px;background:#18262f"></div>
<svg style="left:295px;top:858.5px" width="32" height="28" viewBox="0 0 32 28"><path d="M0 0h11l3 3h17v23H0z" fill="#e9a72a"/><path d="M0 5h31v21H0z" fill="#f9d15e"/><path d="M7 24v-9c0-2 1-3 3-3h11c2 0 3 1 3 3v9h-5v-6h-7v6z" fill="#3b8ee3"/><rect x="13" y="21" width="6" height="5" fill="#f9d15e"/></svg>
<svg style="left:364px;top:856.5px" width="33" height="33" viewBox="0 0 33 33"><path d="M10.2 9.5V6.5c0-3.5 2.5-5.8 6-5.8s6.3 2.3 6.3 5.8v3" fill="none" stroke="#fff" stroke-width="1.6"/><path d="M13 9c0-3 1.5-5 4-5" fill="none" stroke="#fff" stroke-width="1.3"/><path d="M0 8.5h33v22.5c0 1.2-1 2-2 2H2c-1 0-2-.8-2-2z" fill="#fff"/><rect x="8.5" y="13" width="6.4" height="6.2" fill="#f25022"/><rect x="17.3" y="13" width="6.4" height="6.2" fill="#7fba00"/><rect x="8.5" y="21.5" width="6.4" height="6.2" fill="#00a4ef"/><rect x="17.3" y="21.5" width="6.4" height="6.2" fill="#ffb900"/></svg>
<svg style="left:433px;top:859px" width="35" height="28" viewBox="0 0 35 28"><path d="M0.5 9.5L17.5 0.5 34.5 9.5v18H0.5z" fill="#fff"/><path d="M1.4 9h31.3L21 16.4l6 6z" fill="#1e3343"/></svg>
<!-- tray -->
<svg style="left:803.5px;top:862px" width="35" height="23" viewBox="0 0 35 23"><g fill="none" stroke="#fff" stroke-width="1.8"><path d="M0.9 0.9h27v21H3c-1.2 0-2.1-0.9-2.1-2.1z"/><path d="M27.9 4.5h5v15c0 1.5-1 2.6-2.5 2.6h-2.5"/><rect x="4.5" y="8.5" width="9" height="8"/><path d="M17 8.5h7M17 12.5h7M17 16.5h7M4.5 4.5h19"/></g></svg>
<svg style="left:875px;top:868px" width="17" height="11" viewBox="0 0 17 11"><path d="M1 10L8.5 1.5 16 10" fill="none" stroke="#fff" stroke-width="1.8"/></svg>
<svg style="left:905px;top:864px" width="24" height="20" viewBox="0 0 24 20"><g fill="none" stroke="#fff" stroke-width="1.6"><path d="M5.5 4.5h17.5v11H5.5z"/><path d="M14 15.5v3M9 19h10"/><rect x="0.8" y="0.8" width="6.5" height="8" fill="#1d3045"/><path d="M2.5 3h3"/></g></svg>
<svg style="left:940px;top:864px" width="24" height="20" viewBox="0 0 24 20"><g fill="none" stroke="#fff" stroke-width="1.6"><path d="M1 6.5h4l5-5v17l-5-5H1z"/><path d="M13 7c1.2 1 1.2 5 0 6M16 4.5c2.5 2 2.5 9 0 11M19.5 2c3.5 3 3.5 13 0 16"/></g></svg>
<div class="t" style="left:982.8px;top:853.6px;font-size:16px;letter-spacing:0.333px;color:#fff">3:04 PM</div>
<div class="t" style="left:981.2px;top:878.4px;font-size:16px;letter-spacing:0.371px;color:#fff">7/4/2024</div>
<svg style="left:1075px;top:862px" width="36" height="30" viewBox="0 0 36 30"><path d="M0 0h27v18H12l-6 6v-6H0z" fill="#fff"/><path d="M4 4.5h19M4 8.5h19M4 12.5h12" stroke="#1c2d46" stroke-width="1.6"/><circle cx="23" cy="19" r="10" fill="#2b2f36" stroke="#858b92" stroke-width="1.3"/><path d="M20.5 14.5l3.5-2.2V26" fill="none" stroke="#fff" stroke-width="2.2"/></svg>
<div class="a" style="left:1127.3px;top:846px;width:1px;height:54px;background:#6c7a8c"></div>
<!--TEND-->
</div>
</body></html>
